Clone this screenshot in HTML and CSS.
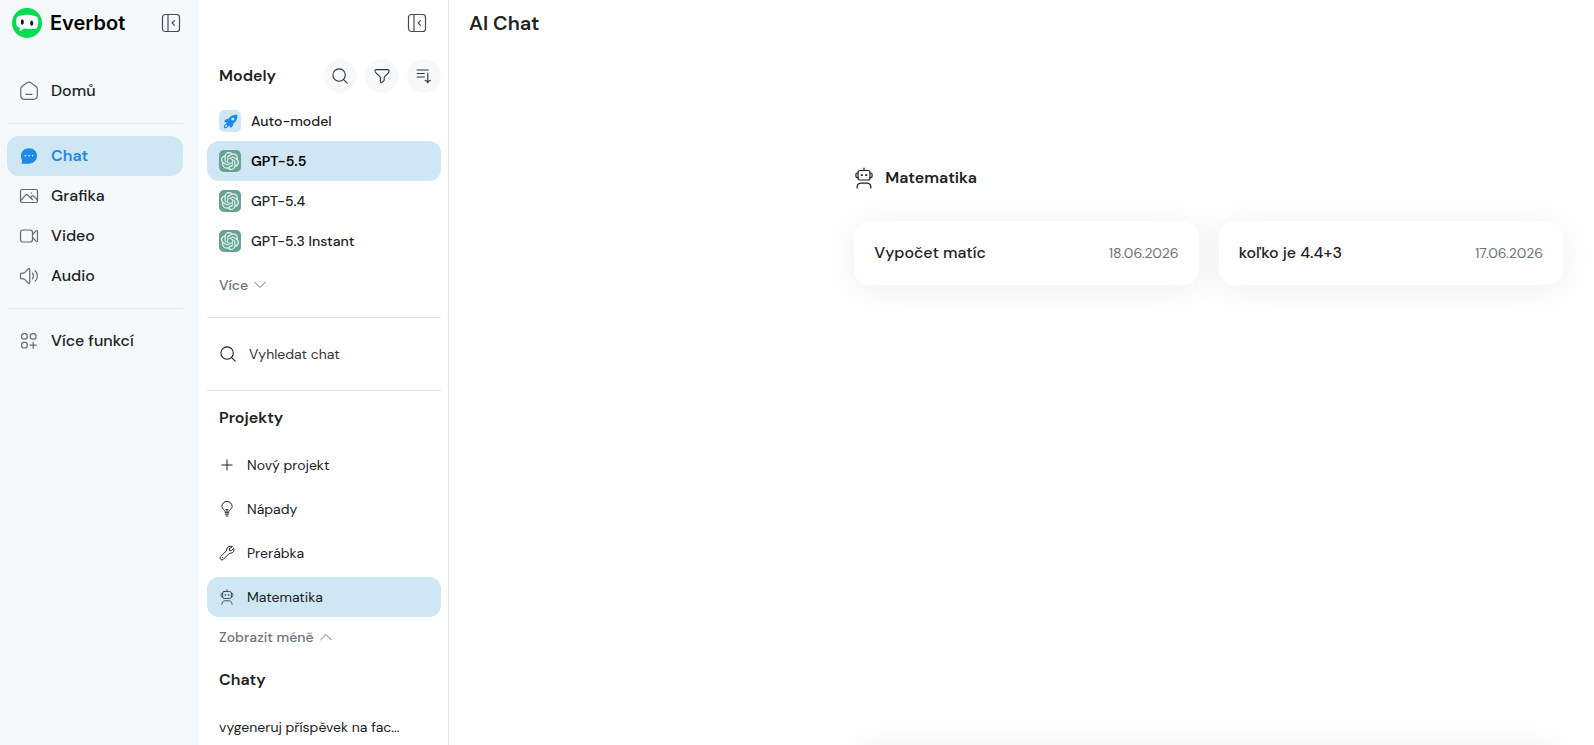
FILE: index.html
```html
<!DOCTYPE html>
<html lang="cs">
<head>
<meta charset="utf-8">
<meta name="viewport" content="width=device-width, initial-scale=1">
<title>Everbot – AI Chat</title>
<link rel="stylesheet" href="styles.css">
</head>
<body>
<svg class="sprite" aria-hidden="true">
  <symbol id="i-panel" viewBox="0 0 20 20"><rect x="1.500" y="1.500" width="17" height="17" rx="2.800"/><path d="M7 1.500v17M13.400 7.700 11.200 10l2.200 2.300"/></symbol>
  <symbol id="i-home" viewBox="0 0 20 20"><path d="M1.700 8.200c0-1.300.5-2.200 1.500-3L8 1.800c1.200-.9 2.800-.9 4 0l4.800 3.400c1 .8 1.500 1.700 1.500 3v6.300c0 2.300-1.500 3.800-3.800 3.800h-9c-2.300 0-3.800-1.500-3.800-3.800zM7 13.300h6"/></symbol>
  <symbol id="i-chat" viewBox="0 0 20 20"><path fill="currentColor" stroke="none" d="M10 2.200c4.600 0 8 3.300 8 7.600s-3.400 7.900-8 7.900H2.200c.9-1 1.100-1.800.8-3-.7-1.400-1-3-1-4.900 0-4.300 3.400-7.600 8-7.600z"/><path stroke="#fff" stroke-width="1.600" stroke-linecap="round" d="M6.500 9.800h.01M10 9.800h.01M13.500 9.800h.01"/></symbol>
  <symbol id="i-image" viewBox="0 0 20 20"><rect x="1.500" y="3.500" width="17" height="13" rx="1.700"/><path d="m2 14 4.800-5.200c.5-.5 1.100-.5 1.600 0l5.200 4.900M11.400 11.800l1.700-1.800c.5-.4 1-.4 1.500 0l3.500 3.600M12.300 6.800h.3"/></symbol>
  <symbol id="i-video" viewBox="0 0 20 20"><rect x="1.500" y="4" width="12" height="12" rx="2.500"/><path d="m13.500 8.500 3.600-3.700c.6-.5 1.400-.3 1.400.5v9.400c0 .8-.8 1-1.400.5l-3.600-3.700"/></symbol>
  <symbol id="i-audio" viewBox="0 0 20 20"><path d="M1.500 8.500c0-.8.500-1.300 1.300-1.300h1.800c.5 0 .8-.2 1.100-.5l3.200-3.600c.8-.9 1.900-.5 1.900.6v12.600c0 1.100-1.100 1.500-1.900.6l-3.200-3.600c-.3-.3-.6-.5-1.100-.5H2.800c-.8 0-1.300-.5-1.300-1.300zM13.500 7.200c1.200 1.700 1.200 3.900 0 5.600M16.200 4.800c2.900 2.800 2.900 7.600 0 10.400"/></symbol>
  <symbol id="i-more" viewBox="0 0 20 20"><rect x="2.600" y="2.600" width="5.600" height="5.600" rx="2.200"/><rect x="11.400" y="2.600" width="5.600" height="5.600" rx="2.200"/><rect x="2.600" y="11.400" width="5.600" height="5.600" rx="2.200"/><path d="M14.200 11.200v6M11.200 14.200h6"/></symbol>
  <symbol id="i-search" viewBox="0 0 20 20"><circle cx="9" cy="9" r="6.900"/><path d="m14 14 4 4"/></symbol>
  <symbol id="i-filter" viewBox="0 0 20 20"><path d="M3.500 2.900h13c1 0 1.500.8 1.300 1.700-.1 1.400-.9 2.400-1.900 3.300l-2.700 2.400c-.6.600-.8 1.100-.8 1.900v2.300c0 .5-.2.900-.6 1.200l-2 1.500c-.8.500-1.600.1-1.600-.8v-4c0-.8-.3-1.400-.8-2L3.800 7C2.900 6.200 2.300 5.400 2.200 4.500c-.1-.9.400-1.600 1.300-1.600z"/></symbol>
  <symbol id="i-sort" viewBox="0 0 20 20"><path d="M2.300 3.400h12.500M2.300 7.300h8M2.300 11.200h8M14.200 7v10.500M11.200 14.800c1.500.4 2.400 1.300 3 2.700.6-1.400 1.500-2.300 3-2.700"/></symbol>
  <symbol id="i-down" viewBox="0 0 12 12"><path d="m.7 3.200 5.300 5.300 5.300-5.300"/></symbol>
  <symbol id="i-up" viewBox="0 0 12 12"><path d="m.7 8.800 5.300-5.300 5.300 5.300"/></symbol>
  <symbol id="i-plus" viewBox="0 0 16 16"><path d="M8 2.900v10.200M2.900 8h10.200"/></symbol>
  <symbol id="i-bulb" viewBox="0 0 16 16"><path d="M6.300 11.300c0-1.200-.6-1.800-1.400-2.600A5 5 0 0 1 2.900 5.500a5.100 5.100 0 0 1 10.200 0c0 1.400-.8 2.400-2 3.200-.8.800-1.400 1.400-1.400 2.600zM6.400 13.200h3.200M7.200 15h1.600M8 9v2.300M7 8.600h2"/></symbol>
  <symbol id="i-wrench" viewBox="0 0 16 16"><path d="M13 1.500c-2-.8-4.800.1-5.200 2.500-.1.900 0 1.300-.6 2l-5.500 5.500c-1.800 1.900.8 4.600 2.700 2.800l5.500-5.500c.5-.5 1.100-.6 2-.6 2.500-.3 3.500-2.700 2.800-4.800l-2.400 2.300-1.800-.1-.1-1.700zM3.500 12.600h.1"/></symbol>
  <symbol id="i-robot" viewBox="0 0 20 22"><rect x="4" y="3.500" width="12" height="9.500" rx="2"/><path d="M10 1v2.500M4 6h-.7c-.8 0-1.400.6-1.400 1.400v1.800c0 .8.600 1.400 1.400 1.400H4M16 6h.7c.8 0 1.400.6 1.400 1.400v1.800c0 .8-.6 1.400-1.400 1.400H16M3 21c0-3 1.800-4.800 4.500-4.800h5c2.700 0 4.500 1.800 4.500 4.800"/><path stroke-width="1.800" d="M7.600 8.200h.4M12 8.200h.4"/></symbol>
  <symbol id="i-rocket" viewBox="0 0 16 16"><path fill="currentColor" stroke="none" d="M15.300.8C10.900.6 7.800 2.200 5.900 5c-1.800-.1-3.400.7-4.600 2.700-.2.400 0 .8.500.8l2 .2-1 1.800 2.700 2.800 1.900-.9.200 1.900c.1.500.5.700.9.400 1.900-1.200 2.700-2.800 2.600-4.500 2.900-1.900 4.500-4.900 4.200-9.400z"/><circle cx="10.500" cy="5.500" r="1.500" fill="#cfe6f5" stroke="none"/><path d="M3.100 11.200c-1.500.6-1.700 1.700-1.700 3.500 1.800 0 2.900-.3 3.400-1.700"/></symbol>
  <symbol id="i-gpt" viewBox="0 0 24 24"><path fill="currentColor" stroke="none" d="M22.2819 9.8211a5.9847 5.9847 0 0 0-.5157-4.9108 6.0462 6.0462 0 0 0-6.5098-2.9A6.0651 6.0651 0 0 0 4.9807 4.1818a5.9847 5.9847 0 0 0-3.9977 2.9 6.0462 6.0462 0 0 0 .7427 7.0966 5.98 5.98 0 0 0 .511 4.9107 6.051 6.051 0 0 0 6.5146 2.9001A5.9847 5.9847 0 0 0 13.2599 24a6.0557 6.0557 0 0 0 5.7718-4.2058 5.9894 5.9894 0 0 0 3.9977-2.9001 6.0557 6.0557 0 0 0-.7475-7.0729zm-9.022 12.6081a4.4755 4.4755 0 0 1-2.8764-1.0408l.1419-.0804 4.7783-2.7582a.7948.7948 0 0 0 .3927-.6813v-6.7369l2.02 1.1686a.071.071 0 0 1 .038.052v5.5826a4.504 4.504 0 0 1-4.4945 4.4944zm-9.6607-4.1254a4.4708 4.4708 0 0 1-.5346-3.0137l.142.0852 4.783 2.7582a.7712.7712 0 0 0 .7806 0l5.8428-3.3685v2.3324a.0804.0804 0 0 1-.0332.0615L9.74 19.9502a4.4992 4.4992 0 0 1-6.1408-1.6464zM2.3408 7.8956a4.485 4.485 0 0 1 2.3655-1.9728V11.6a.7664.7664 0 0 0 .3879.6765l5.8144 3.3543-2.0201 1.1685a.0757.0757 0 0 1-.071 0l-4.8303-2.7865A4.504 4.504 0 0 1 2.3408 7.872zm16.5963 3.8558L13.1038 8.364 15.1192 7.2a.0757.0757 0 0 1 .071 0l4.8303 2.7913a4.4944 4.4944 0 0 1-.6765 8.1042v-5.6772a.79.79 0 0 0-.407-.667zm2.0107-3.0231l-.142-.0852-4.7735-2.7818a.7759.7759 0 0 0-.7854 0L9.409 9.2297V6.8974a.0662.0662 0 0 1 .0284-.0615l4.8303-2.7866a4.4992 4.4992 0 0 1 6.6802 4.66zM8.3065 12.863l-2.02-1.1638a.0804.0804 0 0 1-.038-.0567V6.0742a4.4992 4.4992 0 0 1 7.3757-3.4537l-.142.0805L8.704 5.459a.7948.7948 0 0 0-.3927.6813zm1.0976-2.3654l2.602-1.4998 2.6069 1.4998v2.9994l-2.5974 1.4997-2.6067-1.4997Z"/></symbol>
</svg>

<div class="app">
  <aside class="sidebar">
    <div class="brand">
      <svg class="brand-mark" viewBox="0 0 30 30" aria-hidden="true"><circle cx="15" cy="15" r="15" fill="#00dc50"/><path fill="#fff" d="M9 7.400c4.700-1 9.300-.6 13.800.5 2 .6 3.200 1.600 3.400 3.500.2 2.400 0 4.700-.7 7-.5 1.700-1.700 2.600-3.500 2.600-3.400.1-6.800 0-10.100-.5-1.300 1.500-3 2.400-5 2.600 1-1.100 1.300-2.100 1-3.300-2.100-.7-3.200-1.600-3.500-3.300-.3-2-.3-3.900 0-5.800.3-1.900 1.800-2.900 4.600-3.300z"/><ellipse cx="10.300" cy="14" rx="1.500" ry="2.800" fill="#0b1a10"/><ellipse cx="19.700" cy="15.300" rx="1.500" ry="2.800" fill="#0b1a10"/></svg>
      <span class="brand-name">Everbot</span>
      <button class="toggle" type="button" aria-label="Sbalit menu"><svg class="icon"><use href="#i-panel"/></svg></button>
    </div>
    <nav class="nav">
      <a class="nav-link" href="#"><svg class="icon"><use href="#i-home"/></svg>Domů</a>
      <hr class="rule">
      <a class="nav-link active" href="#"><svg class="icon"><use href="#i-chat"/></svg>Chat</a>
      <a class="nav-link" href="#"><svg class="icon"><use href="#i-image"/></svg>Grafika</a>
      <a class="nav-link" href="#"><svg class="icon"><use href="#i-video"/></svg>Video</a>
      <a class="nav-link" href="#"><svg class="icon"><use href="#i-audio"/></svg>Audio</a>
      <hr class="rule">
      <a class="nav-link" href="#"><svg class="icon"><use href="#i-more"/></svg>Více funkcí</a>
    </nav>
  </aside>

  <section class="panel">
    <div class="panel-top">
      <button class="toggle" type="button" aria-label="Sbalit panel"><svg class="icon"><use href="#i-panel"/></svg></button>
    </div>
    <div class="models-head">
      <h2 class="heading">Modely</h2>
      <div class="tools">
        <button class="round" type="button" aria-label="Hledat model"><svg class="icon-sm"><use href="#i-search"/></svg></button>
        <button class="round" type="button" aria-label="Filtrovat"><svg class="icon-sm"><use href="#i-filter"/></svg></button>
        <button class="round" type="button" aria-label="Seřadit"><svg class="icon-sm"><use href="#i-sort"/></svg></button>
      </div>
    </div>
    <div class="models">
      <button class="row model" type="button"><span class="badge auto"><svg class="rocket"><use href="#i-rocket"/></svg></span>Auto-model</button>
      <button class="row model selected" type="button"><span class="badge gpt"><svg class="logo"><use href="#i-gpt"/></svg></span>GPT-5.5</button>
      <button class="row model" type="button"><span class="badge gpt"><svg class="logo"><use href="#i-gpt"/></svg></span>GPT-5.4</button>
      <button class="row model" type="button"><span class="badge gpt"><svg class="logo"><use href="#i-gpt"/></svg></span>GPT-5.3 Instant</button>
      <button class="expand more" type="button">Více<svg class="chevron"><use href="#i-down"/></svg></button>
    </div>
    <label class="search">
      <svg class="icon-sm"><use href="#i-search"/></svg>
      <input class="search-input" type="text" placeholder="Vyhledat chat" aria-label="Vyhledat chat">
    </label>
    <h2 class="heading projects-title">Projekty</h2>
    <div class="projects">
      <button class="row project" type="button"><svg class="icon-xs"><use href="#i-plus"/></svg>Nový projekt</button>
      <button class="row project" type="button"><svg class="icon-xs"><use href="#i-bulb"/></svg>Nápady</button>
      <button class="row project" type="button"><svg class="icon-xs"><use href="#i-wrench"/></svg>Prerábka</button>
      <button class="row project current" type="button"><svg class="icon-xs"><use href="#i-robot"/></svg>Matematika</button>
    </div>
    <button class="expand less" type="button">Zobrazit méně<svg class="chevron"><use href="#i-up"/></svg></button>
    <h2 class="heading chats-title">Chaty</h2>
    <a class="chat-link" href="#">vygeneruj příspěvek na fac...</a>
  </section>

  <main class="main">
    <div class="view">
      <h1 class="title">AI Chat</h1>
      <section class="content">
        <h2 class="project-title"><svg class="icon-robot"><use href="#i-robot"/></svg>Matematika</h2>
        <div class="cards">
          <a class="card" href="#"><span>Vypočet matíc</span><time class="date" datetime="2026-06-18">18.06.2026</time></a>
          <a class="card" href="#"><span>koľko je 4.4+3</span><time class="date" datetime="2026-06-17">17.06.2026</time></a>
        </div>
      </section>
    </div>
    <div class="composer"></div>
  </main>
</div>
</body>
</html>
```
FILE: styles.css
```css
* { box-sizing: border-box; }

body {
  margin: 0;
  background: #fff;
  color: #202123;
  font-family: "DM Sans", Inter, "Noto Sans", sans-serif;
  font-size: 14px;
  line-height: 20px;
}

a { color: inherit; text-decoration: none; }
h1, h2 { margin: 0; }

button {
  border: 0;
  padding: 0;
  background: none;
  color: inherit;
  font: inherit;
  text-align: left;
  cursor: pointer;
}

svg {
  flex: none;
  fill: none;
  stroke: currentColor;
  stroke-width: 1.2;
  stroke-linecap: round;
  stroke-linejoin: round;
}

.sprite { position: absolute; width: 0; height: 0; }

.app { display: flex; height: 100vh; overflow: hidden; }

/* Primary navigation */
.sidebar {
  flex: none;
  width: 199px;
  padding: 8px 16px 0 7px;
  background: #f5f9fc;
}

.brand { display: flex; align-items: center; padding-left: 5px; }
.brand-mark { width: 30px; height: 30px; stroke: none; }
.brand-name {
  margin-left: 8px;
  color: #000;
  font-family: Inter, "Liberation Sans", sans-serif;
  font-size: 20px;
  font-weight: 600;
  line-height: 30px;
}
.toggle { display: flex; margin-left: auto; color: #454a55; }
.brand .toggle { margin-right: 2px; }

.icon { width: 20px; height: 20px; }
.icon-sm { width: 18px; height: 18px; }
.icon-xs { width: 16px; height: 16px; stroke-width: 1; }

.nav { padding-top: 33px; }
.nav-link {
  display: flex;
  align-items: center;
  gap: 12px;
  height: 40px;
  padding-left: 12px;
  border-radius: 12px;
  font-size: 16px;
  font-weight: 500;
}
.nav-link .icon { color: #626975; }
.nav-link.active, .nav-link.active .icon { color: #2088e5; }
.nav-link.active { background: #cfe6f5; font-weight: 600; }

.rule { height: 1px; margin: 12px 0; border: 0; background: #e3e6ea; }

/* Models, projects and chats */
.panel {
  flex: none;
  width: 250px;
  padding: 13px 7px 0 8px;
  border-right: 1px solid #e3e6ea;
  overflow: hidden;
}
.panel-top { display: flex; padding-right: 14px; }

.heading {
  padding-left: 12px;
  font-size: 16px;
  font-weight: 600;
  line-height: 24px;
}
.models-head {
  display: flex;
  align-items: center;
  justify-content: space-between;
  padding: 26px 0 8px;
}
.tools { display: flex; gap: 8px; }
.round {
  display: flex;
  align-items: center;
  justify-content: center;
  width: 34px;
  height: 34px;
  border-radius: 50%;
  background: #f7f8fa;
  color: #30333b;
}

.row {
  display: flex;
  align-items: center;
  width: 100%;
  height: 40px;
  padding-left: 12px;
  border-radius: 12px;
}
.model { gap: 10px; font-weight: 500; }
.selected { background: #cfe6f5; color: #000; font-weight: 600; }
.badge {
  display: flex;
  align-items: center;
  justify-content: center;
  width: 22px;
  height: 22px;
  border-radius: 5px;
}
.auto { background: #cfe6f5; color: #2088e5; }
.gpt { background: #66a392; color: #e8f4ef; }
.rocket { width: 15px; height: 15px; }
.logo { width: 18px; height: 18px; }

.expand {
  display: flex;
  align-items: center;
  gap: 6px;
  padding-left: 12px;
  color: #6b727e;
  font-weight: 500;
}
.chevron { width: 12px; height: 12px; stroke-width: 1; }
.more { margin: 14px 0 22px; }

.search {
  display: flex;
  align-items: center;
  gap: 12px;
  height: 74px;
  padding-left: 12px;
  border-top: 1px solid #e3e6ea;
  border-bottom: 1px solid #e3e6ea;
}
.search-input {
  width: 100%;
  border: 0;
  padding: 0;
  outline: 0;
  background: none;
  font: inherit;
}
.search-input::placeholder { color: #33363b; opacity: 1; }

.projects-title { margin: 15px 0; }
.projects { display: grid; gap: 4px; }
.project { gap: 12px; }
.current { background: #cfe6f5; }
.less { margin: 10px 0 21px; }
.chat-link { display: block; padding: 25px 12px 0; }

/* Conversation area */
.main { flex: 1; min-width: 0; }
.view { height: 100vh; padding: 8px 0 0 20px; }
.title { font-size: 20px; font-weight: 600; line-height: 30px; }
.content, .composer { width: 62%; margin: 0 31px 0 auto; }
.view .content { width: 63%; padding-top: 128px; }
.project-title {
  display: flex;
  align-items: center;
  gap: 11px;
  font-size: 16px;
  font-weight: 600;
  line-height: 24px;
}
.icon-robot { width: 20px; height: 22px; }

.cards {
  display: grid;
  grid-template-columns: 1fr 1fr;
  gap: 20px;
  padding-top: 31px;
}
.card {
  display: flex;
  align-items: center;
  justify-content: space-between;
  padding: 20px;
  border-radius: 16px;
  background: #fff;
  box-shadow: 0 4px 40px rgba(0, 0, 0, 0.07);
  font-size: 16px;
  font-weight: 500;
  line-height: 24px;
}
.date { color: #6b727e; font-size: 14px; font-weight: 400; }

.composer {
  height: 120px;
  border-radius: 16px;
  box-shadow: 0 4px 40px rgba(0, 0, 0, 0.07);
}
```
